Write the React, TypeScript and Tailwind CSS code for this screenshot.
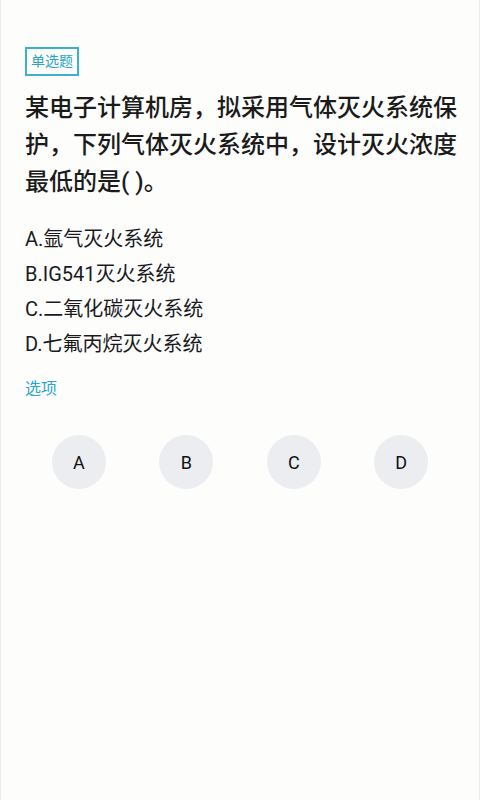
export default function App() {
  const options = [
    "A.氩气灭火系统",
    "B.IG541灭火系统",
    "C.二氧化碳灭火系统",
    "D.七氟丙烷灭火系统",
  ];

  return (
    <div
      className="min-h-[800px] bg-[#fdfdfc] border-x border-[#ececec] pl-6 pr-4 pt-[47px]"
      style={{ fontFamily: 'Roboto, "Noto Sans CJK SC", sans-serif' }}
    >
      <span className="inline-flex h-[29px] items-center border-2 border-[#3fb0cb] px-[4px] text-[14px] text-[#2aa6c4]">
        单选题
      </span>

      <h1 className="mt-[14px] text-[24px] leading-[37px] font-medium text-[#1b1b1b]">
        某电子计算机房，拟采用气体灭火系统保护，下列气体灭火系统中，设计灭火浓度最低的是( )。
      </h1>

      <div className="mt-[21px] flex flex-col text-[20px] leading-[35px] text-[#1a1a1e]">
        {options.map((o) => (
          <p key={o}>{o}</p>
        ))}
      </div>

      <p className="mt-[15px] text-[16px] leading-[24px] text-[#2aa6c8]">选项</p>

      <div className="mt-[34px] mr-2 grid grid-cols-4">
        {["A", "B", "C", "D"].map((l) => (
          <div key={l} className="flex justify-center">
            <button className="flex h-[54px] w-[54px] items-center justify-center rounded-full bg-[#ecedf0] text-[18px] text-[#111]">
              {l}
            </button>
          </div>
        ))}
      </div>
    </div>
  );
}
